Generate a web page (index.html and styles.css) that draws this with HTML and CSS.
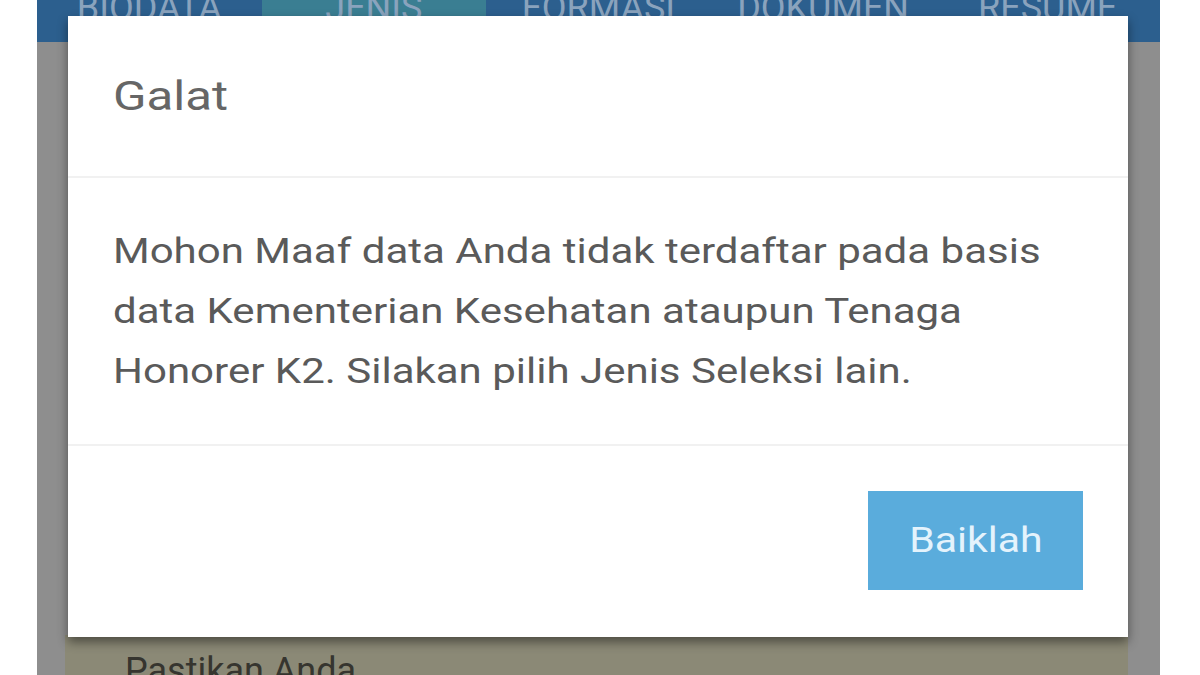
FILE: index.html
```html
<!DOCTYPE html>
<html lang="id">
<head>
<meta charset="utf-8">
<title>Galat</title>
<link rel="stylesheet" href="styles.css">
</head>
<body>
<div class="phone">
  <nav class="tabs">
    <div class="tab">BIODATA</div>
    <div class="tab active">JENIS</div>
    <div class="tab">FORMASI</div>
    <div class="tab">DOKUMEN</div>
    <div class="tab">RESUME</div>
  </nav>
  <main class="page">
    <section class="card">
      <div class="card-title">Pastikan Anda</div>
    </section>
  </main>
  <div class="dialog">
    <header class="dialog-head"><span class="wide">Galat</span></header>
    <div class="dialog-body">
      <span class="wide">Mohon Maaf data Anda tidak terdaftar pada basis</span>
      <span class="wide">data Kementerian Kesehatan ataupun Tenaga</span>
      <span class="wide">Honorer K2. Silakan pilih Jenis Seleksi lain.</span>
    </div>
    <footer class="dialog-foot">
      <button class="btn"><span class="wide-c">Baiklah</span></button>
    </footer>
  </div>
</div>
</body>
</html>
```

FILE: styles.css
```css
html, body {
  margin: 0;
  padding: 0;
  background: #ffffff;
}
body {
  font-family: Roboto, "Noto Sans", "Liberation Sans", sans-serif;
  width: 1200px;
  height: 675px;
  overflow: hidden;
}
.phone {
  position: relative;
  margin-left: 37px;
  width: 1123px;
  height: 675px;
  background: #8e8e8e;
  overflow: hidden;
  display: flex;
  flex-direction: column;
}
.tabs {
  height: 42px;
  flex: none;
  background: #2c5f8e;
  display: flex;
  overflow: hidden;
}
.tab {
  flex: 1;
  text-align: center;
  font-size: 36px;
  line-height: 36px;
  margin-top: -10px;
  color: #8aa3bd;
  height: 52px;
}
.tab.active {
  background: #3a7e92;
}
.page {
  flex: 1;
  display: flex;
  flex-direction: column;
  justify-content: flex-end;
  padding: 0 32px 0 28px;
}
.card {
  background: #8b8976;
  height: 40px;
  padding-left: 60px;
  overflow: hidden;
}
.card-title {
  font-size: 36px;
  line-height: 40px;
  margin-top: 16px;
  color: #36352f;
}
.dialog {
  position: absolute;
  left: 31px;
  top: 16px;
  width: 1060px;
  height: 621px;
  background: #ffffff;
  box-shadow: 0 5px 10px rgba(0, 0, 0, 0.45);
  display: flex;
  flex-direction: column;
}
.wide {
  display: block;
  transform: scaleX(1.2);
  transform-origin: left center;
  white-space: nowrap;
}
.wide-c {
  display: inline-block;
  transform: scaleX(1.17);
  transform-origin: center;
}
.dialog-head {
  height: 160px;
  flex: none;
  display: flex;
  align-items: center;
  padding-left: 45px;
  font-size: 41px;
  color: #666666;
  border-bottom: 2px solid #f1f1f1;
}
.dialog-body {
  height: 268px;
  flex: none;
  box-sizing: border-box;
  padding: 44px 45px;
  font-size: 35px;
  line-height: 60px;
  color: #5a5a5a;
  border-bottom: 2px solid #f1f1f1;
}
.dialog-foot {
  flex: 1;
  display: flex;
  justify-content: flex-end;
  align-items: flex-start;
  padding: 45px 45px 0 0;
}
.btn {
  width: 215px;
  height: 99px;
  border: none;
  background: #5aacdc;
  color: #e4f3fc;
  font-family: Roboto, "Noto Sans", "Liberation Sans", sans-serif;
  font-size: 35px;
  padding: 0;
}
```
